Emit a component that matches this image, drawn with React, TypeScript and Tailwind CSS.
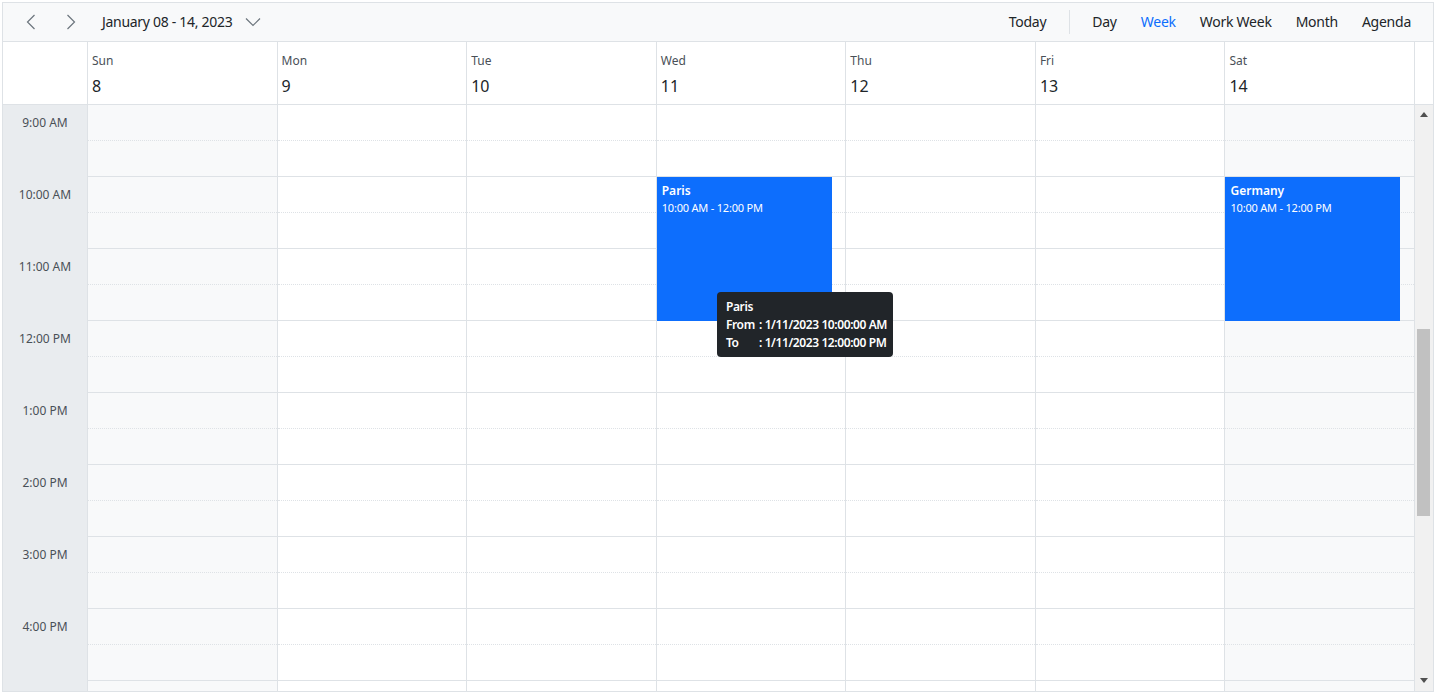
import React from "react";

const days = [
  { name: "Sun", date: "8", weekend: true },
  { name: "Mon", date: "9" },
  { name: "Tue", date: "10" },
  { name: "Wed", date: "11" },
  { name: "Thu", date: "12" },
  { name: "Fri", date: "13" },
  { name: "Sat", date: "14", weekend: true },
];

const hours = ["9:00 AM", "10:00 AM", "11:00 AM", "12:00 PM", "1:00 PM", "2:00 PM", "3:00 PM", "4:00 PM", ""];

function Chevron({ dir }: { dir: "left" | "right" | "down" }) {
  if (dir === "down") {
    return (
      <svg width="16" height="10" viewBox="0 0 16 10" fill="none">
        <path d="M1 1.5 L8 8.5 L15 1.5" stroke="#6c757d" strokeWidth="1.2" />
      </svg>
    );
  }
  return (
    <svg width="10" height="16" viewBox="0 0 10 16" fill="none">
      {dir === "left" ? (
        <path d="M8.5 1 L1.5 8 L8.5 15" stroke="#6c757d" strokeWidth="1.2" />
      ) : (
        <path d="M1.5 1 L8.5 8 L1.5 15" stroke="#6c757d" strokeWidth="1.2" />
      )}
    </svg>
  );
}

function Event({ title }: { title: string }) {
  return (
    <div className="absolute left-0 top-[72px] h-[144px] w-[175px] bg-[#0d6efd] px-[5px] pt-[5px] text-white">
      <div className="text-[12px] font-semibold leading-[17px]">{title}</div>
      <div className="text-[11px] leading-[17px] tracking-[-0.2px]">10:00 AM - 12:00 PM</div>
    </div>
  );
}

export default function App() {
  return (
    <div
      className="relative pl-[2px] pt-[2px]"
      style={{ fontFamily: '"Noto Sans", "Segoe UI", sans-serif' }}
    >
      <div className="flex h-[690px] w-[1432px] flex-col border border-[#dee2e6] bg-white text-[#212529]">
        {/* Toolbar */}
        <div className="flex h-[39px] shrink-0 items-center border-b border-[#dee2e6] bg-[#f8f9fa]">
          <div className="flex items-center pl-[23px]">
            <Chevron dir="left" />
            <span className="ml-[30px] flex">
              <Chevron dir="right" />
            </span>
            <span className="ml-[26px] text-[14px] leading-[20px] tracking-[-0.3px] text-[#212529]">
              January 08 - 14, 2023
            </span>
            <span className="ml-[13px] flex items-center">
              <Chevron dir="down" />
            </span>
          </div>
          <div className="ml-auto flex items-center pr-[22px] text-[14px] leading-[20px] tracking-[-0.25px]">
            <span>Today</span>
            <span className="ml-[23px] mr-[22px] h-[24px] w-px bg-[#dee2e6]" />
            <div className="flex items-center gap-[24px]">
              <span>Day</span>
              <span className="text-[#0d6efd]">Week</span>
              <span>Work Week</span>
              <span>Month</span>
              <span>Agenda</span>
            </div>
          </div>
        </div>

        {/* Header */}
        <div className="flex h-[63px] shrink-0 border-b border-[#dee2e6] pr-[18px]">
          <div className="w-[85px] shrink-0 border-r border-[#dee2e6]" />
          <div className="flex flex-1">
            {days.map((d) => (
              <div key={d.name} className="flex-1 basis-0 border-r border-[#dee2e6] pl-[4px] pt-[10px]">
                <div className="text-[12px] leading-[17px] text-[#495057]">{d.name}</div>
                <div className="mt-[6px] text-[16px] leading-[22px] text-[#212529]">{d.date}</div>
              </div>
            ))}
          </div>
        </div>

        {/* Body */}
        <div className="flex min-h-0 flex-1 overflow-hidden">
          <div className="w-[85px] shrink-0 border-r border-[#dee2e6] bg-[#e9ecef]">
            {hours.map((h, i) => (
              <div key={i} className="h-[72px] pt-[9px] text-center text-[12px] leading-[17px] text-[#495057]">
                {h}
              </div>
            ))}
          </div>
          <div className="flex flex-1">
            {days.map((d, i) => (
              <div
                key={d.name}
                className={
                  "relative flex-1 basis-0 border-r border-[#dee2e6] " +
                  (d.weekend ? "bg-[#f8f9fa]" : "bg-white")
                }
              >
                {hours.map((h, j) => (
                  <div key={j}>
                    <div className="h-[36px] border-b border-dotted border-[#dee2e6]" />
                    <div className="h-[36px] border-b border-[#dee2e6]" />
                  </div>
                ))}
                {i === 3 && <Event title="Paris" />}
                {i === 6 && <Event title="Germany" />}
              </div>
            ))}
          </div>
          {/* Scrollbar */}
          <div className="flex w-[18px] shrink-0 flex-col bg-[#f1f1f1]">
            <div className="flex h-[17px] items-center justify-center pt-[1px]">
              <svg width="8" height="5" viewBox="0 0 8 5">
                <path d="M0 5 L4 0 L8 5 Z" fill="#505050" />
              </svg>
            </div>
            <div className="relative flex-1">
              <div className="ml-[2px] mt-[207px] h-[187px] w-[13px] bg-[#c1c1c1]" />
            </div>
            <div className="flex h-[17px] items-center justify-center pb-[4px]">
              <svg width="8" height="5" viewBox="0 0 8 5">
                <path d="M0 0 L4 5 L8 0 Z" fill="#505050" />
              </svg>
            </div>
          </div>
        </div>
      </div>

      {/* Tooltip */}
      <div className="absolute left-[717px] top-[292px] w-[176px] whitespace-nowrap rounded-[4px] bg-[#212529] pb-[5px] pl-[9px] pt-[6px] text-[12px] font-semibold leading-[18px] tracking-[-0.4px] text-white">
        <div>Paris</div>
        <div>
          <span className="inline-block w-[33px]">From</span>: 1/11/2023 10:00:00 AM
        </div>
        <div>
          <span className="inline-block w-[33px]">To</span>: 1/11/2023 12:00:00 PM
        </div>
      </div>
    </div>
  );
}
